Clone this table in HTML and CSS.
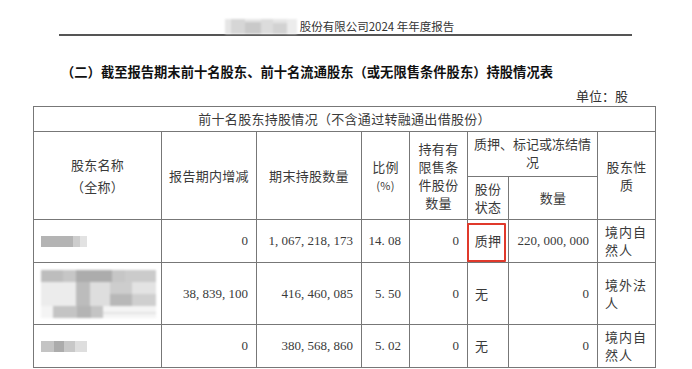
FILE: index.html
```html
<!DOCTYPE html>
<html lang="zh-CN">
<head>
  <meta charset="UTF-8">
  <meta name="viewport" content="width=device-width, initial-scale=1.0">
  <title>股份有限公司2024年年度报告</title>
  <link rel="stylesheet" href="styles.css">
</head>
<body>
  <header class="page-head">
    <svg class="mosaic" width="72" height="15" viewBox="0 0 72 15">
      <rect x="0" y="0" width="72" height="15" fill="#e6e6e6"/>
      <rect x="6" y="0" width="14" height="15" fill="#d6d6d6"/>
      <rect x="20" y="3" width="16" height="12" fill="#c9c9c9"/>
      <rect x="36" y="0" width="12" height="15" fill="#dcdcdc"/>
      <rect x="48" y="4" width="14" height="11" fill="#d2d2d2"/>
      <rect x="62" y="0" width="10" height="15" fill="#ececec"/>
    </svg>
    <span>股份有限公司2024 年年度报告</span>
  </header>

  <h2 class="section-title">（二）截至报告期末前十名股东、前十名流通股东（或无限售条件股东）持股情况表</h2>
  <div class="unit">单位：股</div>

  <table class="holders">
    <colgroup>
      <col style="width:128px">
      <col style="width:95px">
      <col style="width:105px">
      <col style="width:48px">
      <col style="width:58px">
      <col style="width:41px">
      <col style="width:89px">
      <col style="width:58px">
    </colgroup>
    <tr class="caption-row">
      <th colspan="8">前十名股东持股情况（不含通过转融通出借股份）</th>
    </tr>
    <tr class="head-top">
      <th rowspan="2" class="tall">股东名称<br>（全称）</th>
      <th rowspan="2">报告期内增减</th>
      <th rowspan="2">期末持股数量</th>
      <th rowspan="2" class="ratio">比例<br><small>(%)</small></th>
      <th rowspan="2" class="stack">持有有<br>限售条<br>件股份<br>数量</th>
      <th colspan="2" class="pledge">质押、标记或冻结情<br>况</th>
      <th rowspan="2" class="stack">股东性<br>质</th>
    </tr>
    <tr class="head-bottom">
      <th class="state">股份<br>状态</th>
      <th>数量</th>
    </tr>
    <tr class="row-short">
      <td><div class="blur blur-a"></div></td>
      <td class="num">0</td>
      <td class="num">1, 067, 218, 173</td>
      <td class="num">14. 08</td>
      <td class="num">0</td>
      <td class="status mark"><span class="highlight"></span>质押</td>
      <td class="num">220, 000, 000</td>
      <td class="kind">境内自<br>然人</td>
    </tr>
    <tr class="row-long">
      <td>
        <svg class="mosaic" width="115" height="48" viewBox="0 0 115 48">
          <rect x="0" y="0" width="115" height="48" fill="#f4f4f4"/>
          <rect x="0" y="0" width="115" height="12" fill="#c6c6c6"/>
          <rect x="0" y="0" width="22" height="12" fill="#bdbdbd"/>
          <rect x="35" y="0" width="36" height="12" fill="#acacac"/>
          <rect x="84" y="0" width="31" height="12" fill="#cbcbcb"/>
          <rect x="0" y="12" width="35" height="24" fill="#ececec"/>
          <rect x="35" y="12" width="14" height="24" fill="#bcbcbc"/>
          <rect x="49" y="12" width="20" height="24" fill="#dedede"/>
          <rect x="69" y="12" width="22" height="12" fill="#cdcdcd"/>
          <rect x="69" y="24" width="22" height="12" fill="#b8b8b8"/>
          <rect x="91" y="12" width="24" height="12" fill="#e3e3e3"/>
          <rect x="91" y="24" width="24" height="12" fill="#cfcfcf"/>
          <rect x="12" y="36" width="50" height="12" fill="#c4c4c4"/>
          <rect x="36" y="36" width="14" height="12" fill="#b4b4b4"/>
          <rect x="62" y="42" width="53" height="2" fill="#e4e4e4"/>
        </svg>
      </td>
      <td class="num">38, 839, 100</td>
      <td class="num">416, 460, 085</td>
      <td class="num">5. 50</td>
      <td class="num">0</td>
      <td class="status">无</td>
      <td class="num">0</td>
      <td class="kind">境外法<br>人</td>
    </tr>
    <tr class="row-short">
      <td><div class="blur blur-b"></div></td>
      <td class="num">0</td>
      <td class="num">380, 568, 860</td>
      <td class="num">5. 02</td>
      <td class="num">0</td>
      <td class="status">无</td>
      <td class="num">0</td>
      <td class="kind">境内自<br>然人</td>
    </tr>
  </table>
</body>
</html>
```

FILE: styles.css
```css
html, body {
  margin: 0;
  overflow: hidden;
}
body {
  width: 692px;
  height: 369px;
  background-color: #fff;
  color: #333;
  font-family: "Noto Sans CJK SC", "Noto Sans", sans-serif;
}
.page-head {
  margin: 0 60px 0 59px;
  height: 34px;
  border-bottom: 2px solid #555;
  display: flex;
  justify-content: center;
  align-items: flex-end;
  gap: 3px;
  padding-right: 12px;
  font-size: 11.5px;
  line-height: 15px;
  color: #333;
}
.mosaic {
  display: block;
  filter: blur(0.8px);
}
.section-title {
  margin: 26px 0 0 61px;
  font-size: 13.3px;
  line-height: 20px;
  font-weight: bold;
  color: #111;
}
.unit {
  margin-top: 6px;
  padding-right: 64px;
  text-align: right;
  font-size: 13px;
  line-height: 16px;
}
.holders {
  margin: 2px 0 0 33px;
  width: 623px;
  border-collapse: collapse;
  table-layout: fixed;
  font-size: 13px;
  color: #3a3a3a;
}
.holders th,
.holders td {
  border: 1px solid #777;
  padding: 0 2px;
  font-weight: normal;
  line-height: 18px;
  letter-spacing: 0.3px;
  white-space: nowrap;
}
.holders th {
  text-align: center;
}
.caption-row {
  height: 25px;
}
.head-top {
  height: 45px;
}
.head-bottom {
  height: 43px;
}
.holders th.tall {
  line-height: 22px;
}
.ratio small {
  font-size: 11px;
}
.holders th.pledge {
  line-height: 18px;
  padding-top: 3px;
  vertical-align: top;
  letter-spacing: 0;
}
.holders th.state {
  line-height: 18px;
}
.row-short {
  height: 43px;
}
.row-long {
  height: 62px;
}
.holders td:first-child {
  padding-left: 7px;
}
.holders td.num {
  text-align: right;
  font-family: "Liberation Serif", serif;
  padding-right: 8px;
  letter-spacing: 0;
}
.holders td.status {
  position: relative;
  padding-left: 7px;
}
.holders td.mark {
  text-align: center;
  padding: 0;
}
.highlight {
  position: absolute;
  left: -1px;
  top: 3px;
  width: 39px;
  height: 39px;
  box-sizing: border-box;
  border: 2px solid #e0392b;
  border-radius: 1px;
}
.holders td.kind {
  padding: 0 2px 0 7px;
  letter-spacing: 1px;
}
.blur {
  height: 11px;
  filter: blur(0.6px);
}
.blur-a {
  width: 46px;
  background: linear-gradient(to right, #b4b4b4 0, #b4b4b4 70%, #cdcdcd 70%, #cdcdcd 84%, #e2e2e2 84%);
}
.blur-b {
  width: 46px;
  background: linear-gradient(to right, #c4c4c4 0, #c4c4c4 28%, #acacac 28%, #acacac 50%, #c8c8c8 50%, #c8c8c8 74%, #dedede 74%);
}
```
